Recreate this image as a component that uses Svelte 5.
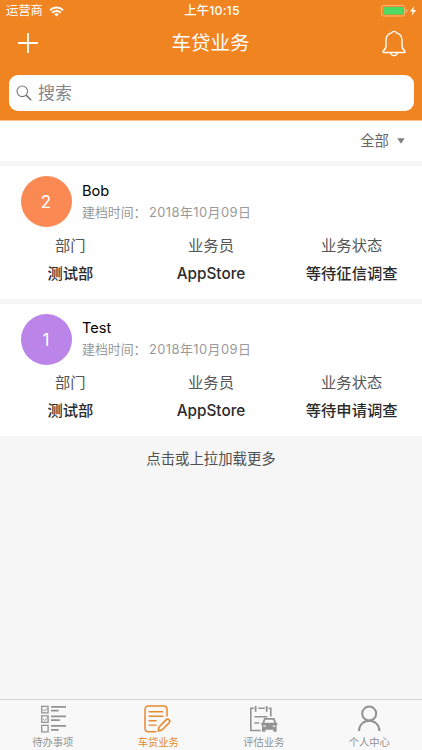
<script lang="ts">
  type Loan = {
    id: number;
    name: string;
    date: string;
    color: string;
    department: string;
    salesman: string;
    status: string;
  };

  type Tab = { key: string; label: string };

  const loans: Loan[] = [
    {
      id: 2,
      name: 'Bob',
      date: '2018年10月09日',
      color: '#fa8953',
      department: '测试部',
      salesman: 'AppStore',
      status: '等待征信调查'
    },
    {
      id: 1,
      name: 'Test',
      date: '2018年10月09日',
      color: '#bb84e8',
      department: '测试部',
      salesman: 'AppStore',
      status: '等待申请调查'
    }
  ];

  const tabs: Tab[] = [
    { key: 'todo', label: '待办事项' },
    { key: 'loan', label: '车贷业务' },
    { key: 'assess', label: '评估业务' },
    { key: 'me', label: '个人中心' }
  ];

  let activeTab = $state('loan');
  let keyword = $state('');
</script>

<div class="screen">
  <header class="header">
    <div class="status-bar">
      <div class="carrier">
        <span>运营商</span>
        <svg width="15" height="11" viewBox="0 0 15 11" fill="none" stroke="#fff" stroke-width="2">
          <path d="M1 4.2a9.2 9.2 0 0 1 13 0M3.3 6.7a5.9 5.9 0 0 1 8.4 0" />
          <path d="M7.5 10.6 5.2 8.3a3.3 3.3 0 0 1 4.6 0z" fill="#fff" stroke="none" />
        </svg>
      </div>
      <span class="time">上午10:15</span>
      <svg class="battery" width="37" height="12" viewBox="0 0 37 12">
        <rect x=".6" y=".6" width="23" height="10.4" rx="2" fill="none" stroke="#ffbd7c" />
        <rect x="2" y="2" width="20.2" height="7.6" rx="1" fill="#4cd964" />
        <path d="M25 4v3.6q1.4-.4 1.4-1.8T25 4z" fill="#ffbd7c" />
        <path d="M33.5.8 29 6.4h2.8l-1.2 4.4L35.2 5h-2.9z" fill="#fff" />
      </svg>
    </div>

    <div class="nav-bar">
      <button type="button" class="icon-btn" aria-label="新增">
        <svg width="22" height="22" viewBox="0 0 22 22" stroke="#fff" stroke-width="1.8">
          <path d="M1 11h20M11 1v20" />
        </svg>
      </button>
      <h1>车贷业务</h1>
      <button type="button" class="icon-btn" aria-label="消息">
        <svg width="24" height="27" viewBox="0 0 24 27" fill="none" stroke="#fff" stroke-width="1.4" stroke-linejoin="round">
          <path d="M9.6 2.9C6 3.8 4 6.7 4 10.2v5.2c0 3-1.1 4.4-2.9 5.6v1.5h21.8V21c-1.8-1.2-2.9-2.6-2.9-5.6v-5.2c0-3.5-2-6.4-5.6-7.3" />
          <path d="M9.6 3a2.5 2.2 0 0 1 4.8 0M8.7 22.8c.4 3.8 6.2 3.8 6.6 0" />
        </svg>
      </button>
    </div>

    <label class="search">
      <svg width="16" height="16" viewBox="0 0 16 16" fill="none" stroke="#77777b" stroke-width="1.1">
        <circle cx="6.3" cy="6.3" r="5.3" />
        <path d="m10.1 10.1 5 5" stroke-width="1.5" />
      </svg>
      <input type="text" placeholder="搜索" bind:value={keyword} />
    </label>
  </header>

  <div class="filter">
    <span>全部</span>
    <svg width="8" height="6" viewBox="0 0 8 6"><path d="M.3.3h7.4L4 5.7z" fill="#808080" /></svg>
  </div>

  <main class="list">
    {#each loans as loan (loan.id)}
      <article class="card">
        <div class="card-head">
          <div class="avatar" style="background-color: {loan.color}">{loan.id}</div>
          <div>
            <div class="name">{loan.name}</div>
            <div class="date">建档时间：<span>{loan.date}</span></div>
          </div>
        </div>
        <dl class="fields">
          <div>
            <dt>部门</dt>
            <dd>{loan.department}</dd>
          </div>
          <div>
            <dt>业务员</dt>
            <dd>{loan.salesman}</dd>
          </div>
          <div>
            <dt>业务状态</dt>
            <dd>{loan.status}</dd>
          </div>
        </dl>
      </article>
    {/each}
    <p class="load-more">点击或上拉加载更多</p>
  </main>

  <nav class="tab-bar">
    {#each tabs as tab (tab.key)}
      <button type="button" class="tab" class:active={activeTab === tab.key} onclick={() => (activeTab = tab.key)}>
        <svg width="28" height="28" viewBox="0 0 28 28" fill="none" stroke="currentColor" stroke-width="1.3">
          {#if tab.key === 'todo'}
            <path d="M2.7 1.4h6.4v6.4H2.7zM2.7 10.9h6.4v6.4H2.7zM2.7 20.4h6.4v6.4H2.7z" />
            <path d="m4 4.4 1.6 1.7 3.2-3.2M4 14l1.6 1.7 3.2-3.2" stroke-width="1" />
            <path d="M12 1.9h15M12 5.7h7.6M12 11.3h15M12 15.2h8.8M12 20.9h15M12 24.9h7.6" stroke-width="1.7" />
          {:else if tab.key === 'loan'}
            <path
              d="M23 11V4.2A3.2 3.2 0 0 0 19.8 1H4.2A3.2 3.2 0 0 0 1 4.2v19.4a3.2 3.2 0 0 0 3.2 3.2h7.5"
              stroke-width="1.5"
              stroke-linecap="round"
            />
            <path d="M4.6 6.7h14.6M4.6 11.2h14.6M4.6 15.7h8M4.6 20.1h8" stroke-width="1.4" />
            <path d="m14.8 22.3 7.5-7.7q1.4-1.1 2.8.2t.2 2.8L18 25l-3.7 1z" stroke-width="1.6" stroke-linejoin="round" />
          {:else if tab.key === 'assess'}
            <path d="M4 3.2H.8v22.3h10M8.2 3.2h6.6M18.6 3.2h2.2v8.3" stroke-width="1.6" />
            <path d="M5.6 1v5.8M16.7 1v5.8" stroke-width="1.8" />
            <path d="M4.4 11.7h13M4.4 18h4.8" stroke-width="1.6" />
            <path
              d="M14.1 13h10.3l2 5h1v1.5l-.8.6v6.7h-3.3v-2h-8v2H12v-6.7l-.9-.6V18h1.2z"
              fill="currentColor"
              stroke="none"
            />
            <path d="m14.3 17.8 1.1-3.1h7.8l1.1 3.1z" fill="#f8f8f8" stroke="none" />
            <path d="M13.3 21.2h2.5M22.8 21.2h2.5" stroke="#f8f8f8" />
          {:else}
            <circle cx="14.2" cy="8.6" r="7" stroke-width="2" />
            <path d="M4 26c0-6 4.4-10.3 10.2-10.3S24.4 20 24.4 26" stroke-width="2" />
          {/if}
        </svg>
        <span>{tab.label}</span>
      </button>
    {/each}
  </nav>
</div>

<style>
  :global(body) {
    margin: 0;
  }

  .screen {
    width: 100%;
    height: 100vh;
    display: flex;
    flex-direction: column;
    overflow: hidden;
    background-color: #f6f6f6;
    font-family: Inter, 'Noto Sans CJK SC', sans-serif;
  }

  button {
    padding: 0;
    border: none;
    background: none;
    font: inherit;
    cursor: pointer;
  }

  svg {
    display: block;
    flex: none;
  }

  .header {
    box-sizing: border-box;
    height: 121px;
    flex: none;
    background-color: #f08420;
    border-bottom: 1px solid #fbc088;
    color: #fff;
  }

  .status-bar {
    height: 22px;
    padding: 0 4px 0 6px;
    display: grid;
    grid-template-columns: 1fr auto 1fr;
    align-items: center;
    font-size: 12.3px;
    line-height: 22px;
  }

  .carrier {
    display: flex;
    align-items: center;
    gap: 6px;
  }

  .time {
    font-weight: 500;
    letter-spacing: 0.2px;
  }

  .battery {
    justify-self: end;
  }

  .nav-bar {
    height: 42px;
    padding: 0 16px 0 17px;
    display: flex;
    align-items: center;
    justify-content: space-between;
  }

  .icon-btn {
    display: flex;
  }

  h1 {
    margin: 0;
    font-size: 19.5px;
    font-weight: 400;
    line-height: 42px;
  }

  .search {
    height: 36.5px;
    margin: 10.5px 8.5px 0;
    padding: 0 8px 0 7.5px;
    display: flex;
    align-items: center;
    gap: 6px;
    border-radius: 9px;
    background-color: #fff;
  }

  .search input {
    flex: 1;
    min-width: 0;
    height: 34px;
    padding: 0;
    border: none;
    outline: none;
    background: none;
    font-family: inherit;
    font-size: 17px;
  }

  .search input::placeholder {
    color: #85858a;
    opacity: 1;
  }

  .filter {
    height: 40px;
    flex: none;
    padding-right: 17px;
    display: flex;
    align-items: center;
    justify-content: flex-end;
    gap: 8px;
    background-color: #fff;
    color: #666;
    font-size: 14.4px;
    line-height: 40px;
  }

  .list {
    flex: 1;
    min-height: 0;
  }

  .card {
    box-sizing: border-box;
    height: 132.5px;
    margin-top: 5px;
    padding-top: 10px;
    background-color: #fff;
  }

  .card-head {
    padding-left: 20.5px;
    display: flex;
    align-items: center;
    gap: 10.5px;
  }

  .avatar {
    width: 51px;
    height: 51px;
    border-radius: 50%;
    color: #fff;
    font-size: 17px;
    line-height: 52px;
    text-align: center;
  }

  .name {
    color: #000;
    font-size: 14.6px;
    line-height: 21px;
  }

  .date {
    color: #999;
    font-size: 12.9px;
    line-height: 21px;
  }

  .date span {
    margin-left: 2.5px;
    letter-spacing: 0.45px;
  }

  .fields {
    margin: 4.6px 0 0;
    display: grid;
    grid-template-columns: repeat(3, 1fr);
    text-align: center;
    font-size: 15.3px;
    line-height: 28px;
  }

  dt {
    color: #555;
  }

  dd {
    margin: 0;
    color: #2b2b2b;
    font-weight: 500;
  }

  .load-more {
    margin: 12px 0 0;
    color: #505050;
    font-size: 14.4px;
    line-height: 22px;
    text-align: center;
  }

  .tab-bar {
    box-sizing: border-box;
    height: 51px;
    flex: none;
    display: grid;
    grid-template-columns: repeat(4, 1fr);
    border-top: 1px solid #d5d5d5;
    background-color: #f8f8f8;
  }

  .tab {
    padding-top: 5px;
    display: flex;
    flex-direction: column;
    align-items: center;
    color: #929292;
    font-size: 10.3px;
    line-height: 19px;
  }

  .tab.active {
    color: #e58930;
  }
</style>
